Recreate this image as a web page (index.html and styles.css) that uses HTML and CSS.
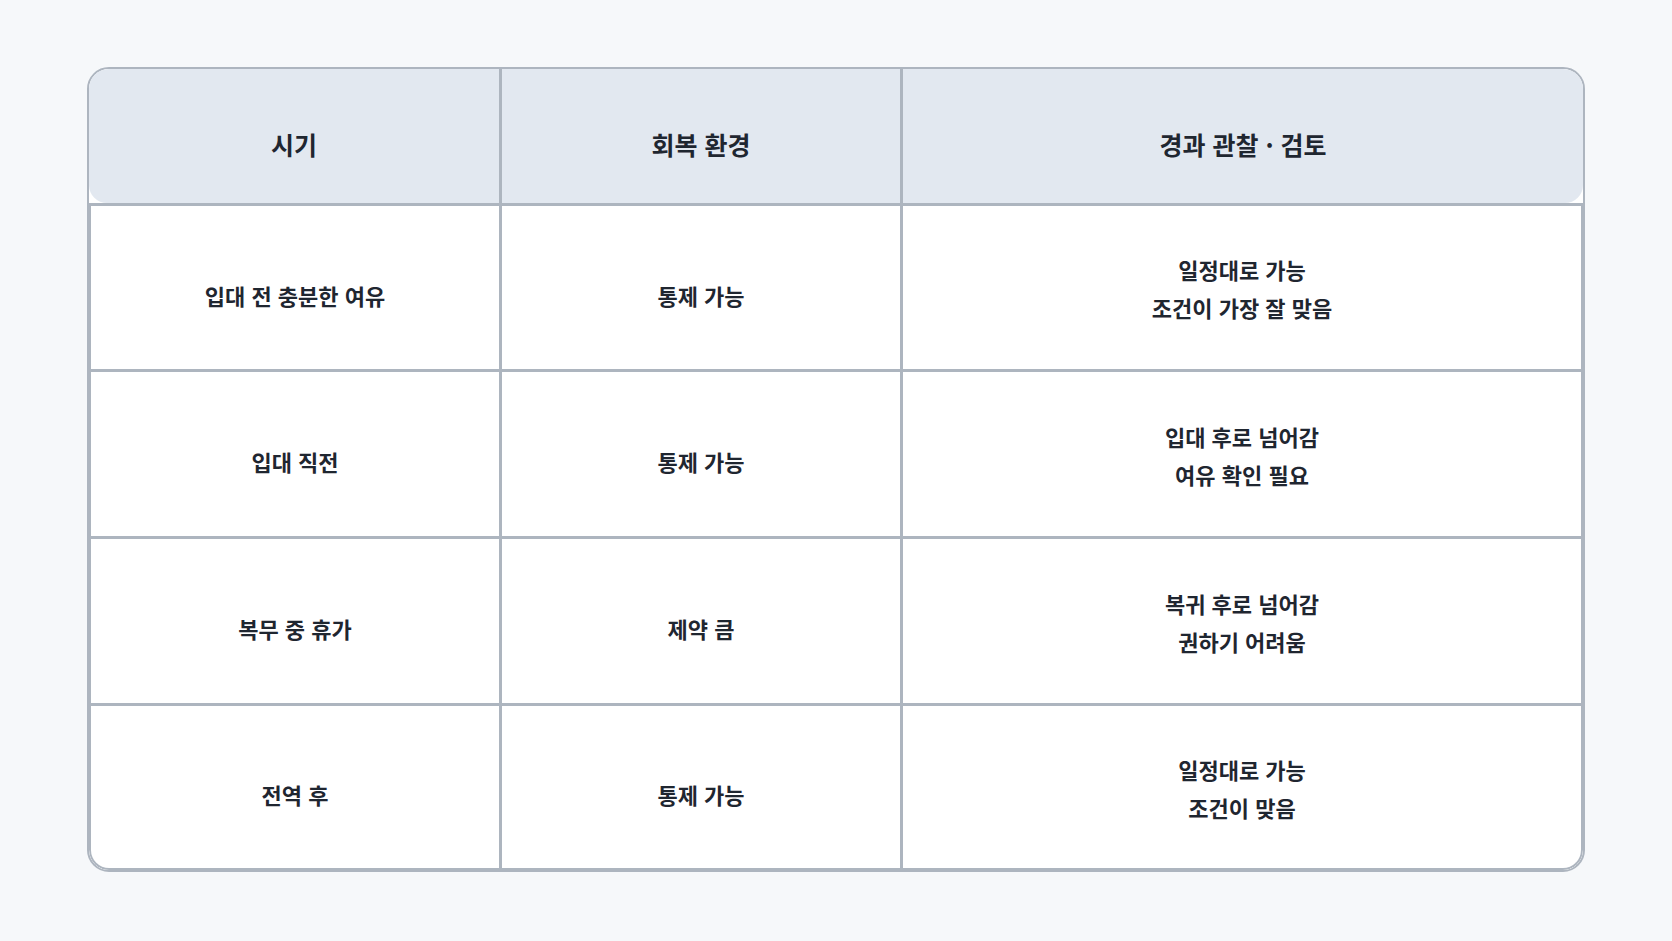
FILE: index.html
```html
<!DOCTYPE html>
<html lang="ko">
<head>
<meta charset="utf-8">
<link rel="stylesheet" href="styles.css">
</head>
<body>
<div class="card">
  <div class="head">
    <div class="hcell first">시기</div>
    <div class="hcell">회복 환경</div>
    <div class="hcell last">경과 관찰 · 검토</div>
  </div>
  <div class="tbody">
    <div class="row">
      <div class="cell single">입대 전 충분한 여유</div>
      <div class="cell single">통제 가능</div>
      <div class="cell">일정대로 가능<br>조건이 가장 잘 맞음</div>
    </div>
    <div class="row">
      <div class="cell single">입대 직전</div>
      <div class="cell single">통제 가능</div>
      <div class="cell">입대 후로 넘어감<br>여유 확인 필요</div>
    </div>
    <div class="row">
      <div class="cell single">복무 중 휴가</div>
      <div class="cell single">제약 큼</div>
      <div class="cell">복귀 후로 넘어감<br>권하기 어려움</div>
    </div>
    <div class="row last">
      <div class="cell single">전역 후</div>
      <div class="cell single">통제 가능</div>
      <div class="cell">일정대로 가능<br>조건이 맞음</div>
    </div>
  </div>
</div>
</body>
</html>
```

FILE: styles.css
```css
html, body {
  margin: 0;
  padding: 0;
}
body {
  background: #f6f8fa;
  font-family: "Noto Sans CJK KR", "Noto Sans", sans-serif;
  color: #1f2630;
  padding: 67px 87px 0 87px;
}
.card {
  border: 2px solid #adb5bf;
  border-radius: 22px;
  background: #ffffff;
  overflow: hidden;
}
.head {
  display: grid;
  grid-template-columns: 410px 401px 1fr;
  height: 134px;
  border-bottom: 3px solid #adb5bf;
}
.hcell {
  background: #e2e8f0;
  display: flex;
  align-items: center;
  justify-content: center;
  padding-top: 16px;
  box-sizing: border-box;
  font-size: 25px;
  font-weight: 700;
  border-left: 3px solid #adb5bf;
}
.hcell.first {
  border-left: none;
  border-bottom-left-radius: 18px;
}
.hcell.last {
  border-bottom-right-radius: 18px;
}
.tbody {
  border-left: 2px solid #adb5bf;
  border-right: 2px solid #adb5bf;
  border-bottom: 2px solid #adb5bf;
  border-bottom-left-radius: 20px;
  border-bottom-right-radius: 20px;
}
.row {
  display: grid;
  grid-template-columns: 408px 401px 1fr;
  height: 164px;
  border-bottom: 3px solid #adb5bf;
}
.row:first-child {
  height: 163px;
}
.row.last {
  border-bottom: none;
  height: 162px;
}
.cell {
  display: flex;
  align-items: center;
  justify-content: center;
  text-align: center;
  font-size: 22px;
  font-weight: 700;
  line-height: 38px;
  border-left: 3px solid #adb5bf;
  box-sizing: border-box;
  padding-top: 1px;
}
.row .cell:first-child {
  border-left: none;
}
.cell.single {
  padding-top: 14px;
}
```
